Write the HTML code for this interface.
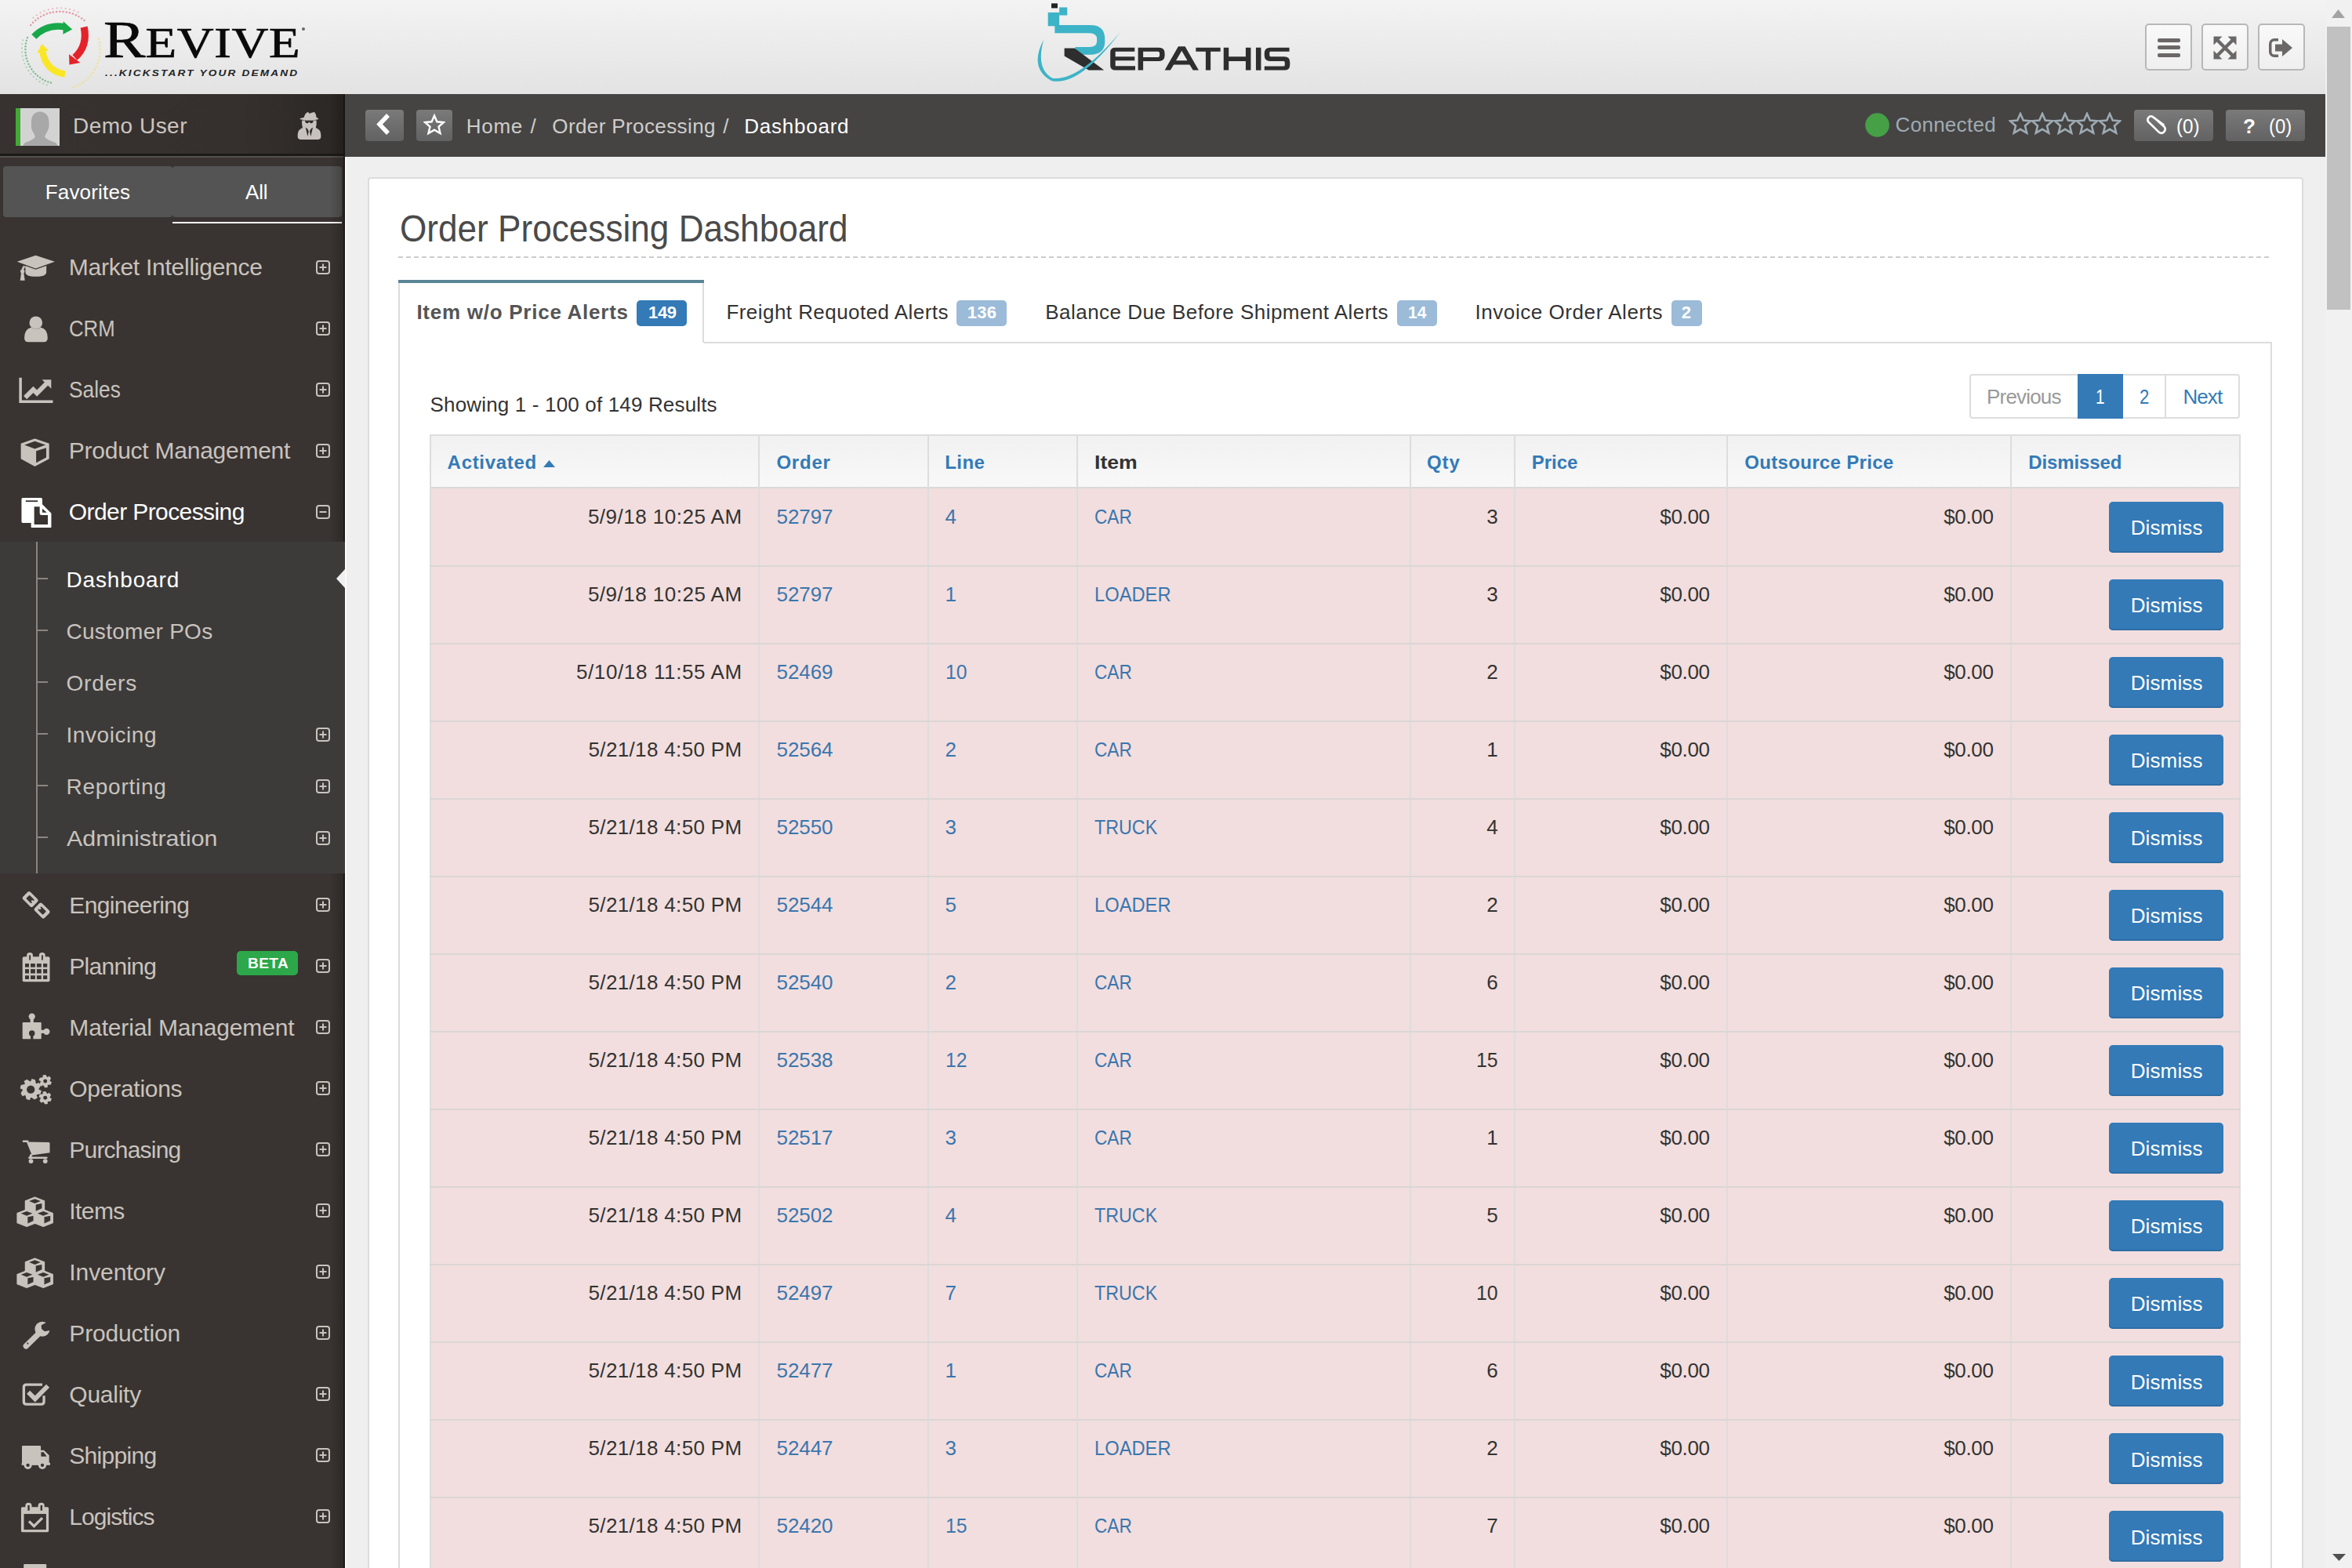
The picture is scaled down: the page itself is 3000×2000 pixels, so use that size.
<!DOCTYPE html><html><head><meta charset="utf-8"><style>
html,body{margin:0;padding:0;width:3000px;height:2000px;overflow:hidden;background:#efefef;font-family:"Liberation Sans",sans-serif;}
body{position:relative;}
</style></head><body><div style="position:absolute;left:0px;top:0px;width:2966px;height:120px;background:linear-gradient(#f3f3f3,#e3e3e3);"></div>
<div style="position:absolute;left:2966px;top:0px;width:34px;height:2000px;background:#f1f1f1;"></div>
<div style="position:absolute;left:2968px;top:34px;width:30px;height:361px;background:#c1c1c1;"></div>
<svg style="position:absolute;left:2974px;top:12px;" width="17" height="11" viewBox="0 0 17 11"><path d="M0 11 L8.5 0 L17 11Z" fill="#a3a3a3"/></svg>
<svg style="position:absolute;left:2975px;top:1982px;" width="17" height="9" viewBox="0 0 17 9"><path d="M0 0 L17 0 L8.5 9Z" fill="#505050"/></svg>
<div style="position:absolute;left:2736px;top:30px;width:56px;height:56px;border:2px solid #b8b8b8;border-radius:5px;background:linear-gradient(#f9f9f9,#efefef);"></div>
<div style="position:absolute;left:2808px;top:30px;width:56px;height:56px;border:2px solid #b8b8b8;border-radius:5px;background:linear-gradient(#f9f9f9,#efefef);"></div>
<div style="position:absolute;left:2880px;top:30px;width:56px;height:56px;border:2px solid #b8b8b8;border-radius:5px;background:linear-gradient(#f9f9f9,#efefef);"></div>
<div style="position:absolute;left:2751.5px;top:49px;width:29.5px;height:4.8px;background:#6b6767;border-radius:2px;"></div>
<div style="position:absolute;left:2751.5px;top:58.3px;width:29.5px;height:4.8px;background:#6b6767;border-radius:2px;"></div>
<div style="position:absolute;left:2751.5px;top:68px;width:29.5px;height:4.8px;background:#6b6767;border-radius:2px;"></div>
<svg style="position:absolute;left:2823px;top:46px;" width="30" height="30" viewBox="0 0 30 30"><g fill="#6b6767"><path d="M0.5 0.5H11.5L0.5 11.5Z"/><path d="M29.5 0.5V11.5L18.5 0.5Z"/><path d="M0.5 29.5V18.5L11.5 29.5Z"/><path d="M29.5 29.5H18.5L29.5 18.5Z"/></g><path d="M4 4L26 26M26 4L4 26" stroke="#6b6767" stroke-width="4.3"/></svg>
<svg style="position:absolute;left:2894px;top:49px;" width="30" height="24" viewBox="0 0 30 24"><g fill="#6b6767"><path d="M12 0H7A7 7 0 0 0 0 7V17A7 7 0 0 0 7 24H12V20.5H7A3.5 3.5 0 0 1 3.5 17V7A3.5 3.5 0 0 1 7 3.5H12Z"/><path d="M8 7.5H17V1L30 12L17 23V16.5H8Z"/></g></svg>
<div style="position:absolute;left:0px;top:120px;width:440px;height:1880px;background:#393431;"></div>
<div style="position:absolute;left:0px;top:120px;width:440px;height:77px;background:linear-gradient(90deg,#37322f 0%,#35302d 70%,#2b2724 100%);"></div>
<div style="position:absolute;left:0px;top:196px;width:440px;height:3px;background:#1c1a19;"></div>
<div style="position:absolute;left:0px;top:199px;width:440px;height:2px;background:#53504d;"></div>
<div style="position:absolute;left:20px;top:138px;width:56px;height:48px;background:#d3d3d3;"></div>
<div style="position:absolute;left:20px;top:138px;width:6px;height:48px;background:#43a935;"></div>
<svg style="position:absolute;left:26px;top:138px;" width="50" height="48" viewBox="0 0 50 48"><g fill="#a8a8a8"><path d="M14 20 Q13 5 25 4.5 Q37 5 36.5 20 Q37 26 33 32 L31 36 Q32 40 45 44 L48 48 L3 48 L6 44 Q18 40 19 36 L17 32 Q13 26 14 20Z"/></g></svg>
<div style="position:absolute;left:93.00px;top:147.30px;font-size:28px;line-height:28px;color:#cbc5c0;white-space:nowrap;letter-spacing:0.49px;">Demo User</div>
<svg style="position:absolute;left:300px;top:100px;" width="300" height="150" viewBox="0 0 2352 1176"><g fill="#c7c2be"><path d="M688 390 Q700 345 728 338 Q745 348 740 352 Q765 342 790 338 Q805 345 812 390 L835 402 Q830 418 740 418 Q650 418 645 402Z"/><path d="M668 420 L812 420 Q818 455 805 500 L675 500 Q662 455 668 420Z"/><path d="M625 560 Q625 505 690 490 L790 490 Q857 505 857 560 L857 585 Q857 612 825 612 L657 612 Q625 612 625 585Z"/></g><path d="M698 424 L782 424 L778 440 Q770 452 752 446 L740 436 L728 446 Q710 452 702 440Z" fill="#2f2b28"/><path d="M703 490 Q728 500 735 530 L725 580Z M777 490 Q752 500 745 530 L755 580Z" fill="#2f2b28"/></svg>
<div style="position:absolute;left:4px;top:212px;width:216px;height:65px;background:#545454;border-radius:4px;"></div>
<div style="position:absolute;left:220px;top:212px;width:216px;height:65px;background:#545454;border-radius:4px;"></div>
<div style="position:absolute;left:220px;top:283px;width:216px;height:2px;background:#ffffff;"></div>
<div style="position:absolute;left:57.80px;top:231.99px;font-size:26px;line-height:26px;color:#ffffff;white-space:nowrap;letter-spacing:0.16px;">Favorites</div>
<div style="position:absolute;left:313.00px;top:231.99px;font-size:26px;line-height:26px;color:#ffffff;white-space:nowrap;letter-spacing:-0.20px;">All</div>
<div style="position:absolute;left:87.80px;top:326.31px;font-size:30px;line-height:30px;color:#c9c3be;white-space:nowrap;letter-spacing:-0.26px;">Market Intelligence</div>
<div style="position:absolute;left:87.80px;top:404.31px;font-size:30px;line-height:30px;color:#c9c3be;white-space:nowrap;transform:scaleX(0.8580);transform-origin:0 0;">CRM</div>
<div style="position:absolute;left:87.80px;top:482.31px;font-size:30px;line-height:30px;color:#c9c3be;white-space:nowrap;transform:scaleX(0.8773);transform-origin:0 0;">Sales</div>
<div style="position:absolute;left:87.80px;top:560.31px;font-size:30px;line-height:30px;color:#c9c3be;white-space:nowrap;letter-spacing:-0.25px;">Product Management</div>
<div style="position:absolute;left:87.80px;top:638.31px;font-size:30px;line-height:30px;color:#ffffff;white-space:nowrap;letter-spacing:-0.59px;">Order Processing</div>
<div style="position:absolute;left:420px;top:120px;width:18px;height:1880px;background:linear-gradient(90deg,rgba(0,0,0,0),rgba(0,0,0,0.2));"></div>
<div style="position:absolute;left:438px;top:120px;width:2px;height:1880px;background:rgba(20,18,17,0.75);"></div>
<div style="position:absolute;left:440px;top:200px;width:1.5px;height:1800px;background:#fbfbfb;"></div>
<div style="position:absolute;left:0px;top:691px;width:440px;height:423px;background:#3d3b3a;"></div>
<div style="position:absolute;left:46px;top:691px;width:2px;height:423px;background:#8a8580;"></div>
<div style="position:absolute;left:84.50px;top:725.70px;font-size:28px;line-height:28px;color:#ffffff;white-space:nowrap;letter-spacing:0.84px;">Dashboard</div>
<div style="position:absolute;left:46px;top:736.9px;width:15px;height:2px;background:#8a8580;"></div>
<div style="position:absolute;left:84.50px;top:791.70px;font-size:28px;line-height:28px;color:#c9c3be;white-space:nowrap;letter-spacing:0.28px;">Customer POs</div>
<div style="position:absolute;left:46px;top:802.9px;width:15px;height:2px;background:#8a8580;"></div>
<div style="position:absolute;left:84.50px;top:857.70px;font-size:28px;line-height:28px;color:#c9c3be;white-space:nowrap;letter-spacing:0.82px;">Orders</div>
<div style="position:absolute;left:46px;top:868.9px;width:15px;height:2px;background:#8a8580;"></div>
<div style="position:absolute;left:84.50px;top:923.70px;font-size:28px;line-height:28px;color:#c9c3be;white-space:nowrap;letter-spacing:0.56px;">Invoicing</div>
<div style="position:absolute;left:46px;top:934.9px;width:15px;height:2px;background:#8a8580;"></div>
<div style="position:absolute;left:84.50px;top:989.70px;font-size:28px;line-height:28px;color:#c9c3be;white-space:nowrap;letter-spacing:0.74px;">Reporting</div>
<div style="position:absolute;left:46px;top:1000.9px;width:15px;height:2px;background:#8a8580;"></div>
<div style="position:absolute;left:84.50px;top:1055.70px;font-size:28px;line-height:28px;color:#c9c3be;white-space:nowrap;transform:scaleX(1.0851);transform-origin:0 0;">Administration</div>
<div style="position:absolute;left:46px;top:1066.9px;width:15px;height:2px;background:#8a8580;"></div>
<svg style="position:absolute;left:429px;top:726px;" width="11" height="24" viewBox="0 0 11 24"><path d="M11 0 L0 12 L11 24Z" fill="#efefef"/></svg>
<div style="position:absolute;left:88.30px;top:1140.01px;font-size:30px;line-height:30px;color:#c9c3be;white-space:nowrap;letter-spacing:-0.64px;">Engineering</div>
<div style="position:absolute;left:88.30px;top:1218.01px;font-size:30px;line-height:30px;color:#c9c3be;white-space:nowrap;letter-spacing:-0.73px;">Planning</div>
<div style="position:absolute;left:88.30px;top:1296.01px;font-size:30px;line-height:30px;color:#c9c3be;white-space:nowrap;letter-spacing:-0.16px;">Material Management</div>
<div style="position:absolute;left:88.30px;top:1374.01px;font-size:30px;line-height:30px;color:#c9c3be;white-space:nowrap;letter-spacing:-0.27px;">Operations</div>
<div style="position:absolute;left:88.30px;top:1452.01px;font-size:30px;line-height:30px;color:#c9c3be;white-space:nowrap;letter-spacing:-0.79px;">Purchasing</div>
<div style="position:absolute;left:88.30px;top:1530.01px;font-size:30px;line-height:30px;color:#c9c3be;white-space:nowrap;letter-spacing:-0.57px;">Items</div>
<div style="position:absolute;left:88.30px;top:1608.01px;font-size:30px;line-height:30px;color:#c9c3be;white-space:nowrap;letter-spacing:-0.09px;">Inventory</div>
<div style="position:absolute;left:88.30px;top:1686.01px;font-size:30px;line-height:30px;color:#c9c3be;white-space:nowrap;letter-spacing:-0.17px;">Production</div>
<div style="position:absolute;left:88.30px;top:1764.01px;font-size:30px;line-height:30px;color:#c9c3be;white-space:nowrap;letter-spacing:-0.25px;">Quality</div>
<div style="position:absolute;left:88.30px;top:1842.01px;font-size:30px;line-height:30px;color:#c9c3be;white-space:nowrap;letter-spacing:-0.69px;">Shipping</div>
<div style="position:absolute;left:88.30px;top:1920.01px;font-size:30px;line-height:30px;color:#c9c3be;white-space:nowrap;letter-spacing:-0.94px;">Logistics</div>
<div style="position:absolute;left:302px;top:1213px;width:78px;height:31px;background:#2ca84a;border-radius:5px;"></div>
<div style="position:absolute;left:316.00px;top:1218.52px;font-size:19px;line-height:19px;color:#ffffff;white-space:nowrap;font-weight:700;letter-spacing:0.43px;">BETA</div>
<svg style="position:absolute;left:402.5px;top:331.7px;" width="18" height="18" viewBox="0 0 18 18"><rect x="1" y="1" width="16" height="16" rx="3" fill="none" stroke="#c9c3be" stroke-width="2"/><path d="M4.5 9H13.5" stroke="#c9c3be" stroke-width="2"/><path d="M9 4.5V13.5" stroke="#c9c3be" stroke-width="2"/></svg>
<svg style="position:absolute;left:402.5px;top:409.7px;" width="18" height="18" viewBox="0 0 18 18"><rect x="1" y="1" width="16" height="16" rx="3" fill="none" stroke="#c9c3be" stroke-width="2"/><path d="M4.5 9H13.5" stroke="#c9c3be" stroke-width="2"/><path d="M9 4.5V13.5" stroke="#c9c3be" stroke-width="2"/></svg>
<svg style="position:absolute;left:402.5px;top:487.7px;" width="18" height="18" viewBox="0 0 18 18"><rect x="1" y="1" width="16" height="16" rx="3" fill="none" stroke="#c9c3be" stroke-width="2"/><path d="M4.5 9H13.5" stroke="#c9c3be" stroke-width="2"/><path d="M9 4.5V13.5" stroke="#c9c3be" stroke-width="2"/></svg>
<svg style="position:absolute;left:402.5px;top:565.7px;" width="18" height="18" viewBox="0 0 18 18"><rect x="1" y="1" width="16" height="16" rx="3" fill="none" stroke="#c9c3be" stroke-width="2"/><path d="M4.5 9H13.5" stroke="#c9c3be" stroke-width="2"/><path d="M9 4.5V13.5" stroke="#c9c3be" stroke-width="2"/></svg>
<svg style="position:absolute;left:402.5px;top:643.7px;" width="18" height="18" viewBox="0 0 18 18"><rect x="1" y="1" width="16" height="16" rx="3" fill="none" stroke="#c9c3be" stroke-width="2"/><path d="M4.5 9H13.5" stroke="#c9c3be" stroke-width="2"/></svg>
<svg style="position:absolute;left:402.5px;top:927.9px;" width="18" height="18" viewBox="0 0 18 18"><rect x="1" y="1" width="16" height="16" rx="3" fill="none" stroke="#c9c3be" stroke-width="2"/><path d="M4.5 9H13.5" stroke="#c9c3be" stroke-width="2"/><path d="M9 4.5V13.5" stroke="#c9c3be" stroke-width="2"/></svg>
<svg style="position:absolute;left:402.5px;top:993.9px;" width="18" height="18" viewBox="0 0 18 18"><rect x="1" y="1" width="16" height="16" rx="3" fill="none" stroke="#c9c3be" stroke-width="2"/><path d="M4.5 9H13.5" stroke="#c9c3be" stroke-width="2"/><path d="M9 4.5V13.5" stroke="#c9c3be" stroke-width="2"/></svg>
<svg style="position:absolute;left:402.5px;top:1059.9px;" width="18" height="18" viewBox="0 0 18 18"><rect x="1" y="1" width="16" height="16" rx="3" fill="none" stroke="#c9c3be" stroke-width="2"/><path d="M4.5 9H13.5" stroke="#c9c3be" stroke-width="2"/><path d="M9 4.5V13.5" stroke="#c9c3be" stroke-width="2"/></svg>
<svg style="position:absolute;left:402.5px;top:1145.4px;" width="18" height="18" viewBox="0 0 18 18"><rect x="1" y="1" width="16" height="16" rx="3" fill="none" stroke="#c9c3be" stroke-width="2"/><path d="M4.5 9H13.5" stroke="#c9c3be" stroke-width="2"/><path d="M9 4.5V13.5" stroke="#c9c3be" stroke-width="2"/></svg>
<svg style="position:absolute;left:402.5px;top:1223.4px;" width="18" height="18" viewBox="0 0 18 18"><rect x="1" y="1" width="16" height="16" rx="3" fill="none" stroke="#c9c3be" stroke-width="2"/><path d="M4.5 9H13.5" stroke="#c9c3be" stroke-width="2"/><path d="M9 4.5V13.5" stroke="#c9c3be" stroke-width="2"/></svg>
<svg style="position:absolute;left:402.5px;top:1301.4px;" width="18" height="18" viewBox="0 0 18 18"><rect x="1" y="1" width="16" height="16" rx="3" fill="none" stroke="#c9c3be" stroke-width="2"/><path d="M4.5 9H13.5" stroke="#c9c3be" stroke-width="2"/><path d="M9 4.5V13.5" stroke="#c9c3be" stroke-width="2"/></svg>
<svg style="position:absolute;left:402.5px;top:1379.4px;" width="18" height="18" viewBox="0 0 18 18"><rect x="1" y="1" width="16" height="16" rx="3" fill="none" stroke="#c9c3be" stroke-width="2"/><path d="M4.5 9H13.5" stroke="#c9c3be" stroke-width="2"/><path d="M9 4.5V13.5" stroke="#c9c3be" stroke-width="2"/></svg>
<svg style="position:absolute;left:402.5px;top:1457.4px;" width="18" height="18" viewBox="0 0 18 18"><rect x="1" y="1" width="16" height="16" rx="3" fill="none" stroke="#c9c3be" stroke-width="2"/><path d="M4.5 9H13.5" stroke="#c9c3be" stroke-width="2"/><path d="M9 4.5V13.5" stroke="#c9c3be" stroke-width="2"/></svg>
<svg style="position:absolute;left:402.5px;top:1535.4px;" width="18" height="18" viewBox="0 0 18 18"><rect x="1" y="1" width="16" height="16" rx="3" fill="none" stroke="#c9c3be" stroke-width="2"/><path d="M4.5 9H13.5" stroke="#c9c3be" stroke-width="2"/><path d="M9 4.5V13.5" stroke="#c9c3be" stroke-width="2"/></svg>
<svg style="position:absolute;left:402.5px;top:1613.4px;" width="18" height="18" viewBox="0 0 18 18"><rect x="1" y="1" width="16" height="16" rx="3" fill="none" stroke="#c9c3be" stroke-width="2"/><path d="M4.5 9H13.5" stroke="#c9c3be" stroke-width="2"/><path d="M9 4.5V13.5" stroke="#c9c3be" stroke-width="2"/></svg>
<svg style="position:absolute;left:402.5px;top:1691.4px;" width="18" height="18" viewBox="0 0 18 18"><rect x="1" y="1" width="16" height="16" rx="3" fill="none" stroke="#c9c3be" stroke-width="2"/><path d="M4.5 9H13.5" stroke="#c9c3be" stroke-width="2"/><path d="M9 4.5V13.5" stroke="#c9c3be" stroke-width="2"/></svg>
<svg style="position:absolute;left:402.5px;top:1769.4px;" width="18" height="18" viewBox="0 0 18 18"><rect x="1" y="1" width="16" height="16" rx="3" fill="none" stroke="#c9c3be" stroke-width="2"/><path d="M4.5 9H13.5" stroke="#c9c3be" stroke-width="2"/><path d="M9 4.5V13.5" stroke="#c9c3be" stroke-width="2"/></svg>
<svg style="position:absolute;left:402.5px;top:1847.4px;" width="18" height="18" viewBox="0 0 18 18"><rect x="1" y="1" width="16" height="16" rx="3" fill="none" stroke="#c9c3be" stroke-width="2"/><path d="M4.5 9H13.5" stroke="#c9c3be" stroke-width="2"/><path d="M9 4.5V13.5" stroke="#c9c3be" stroke-width="2"/></svg>
<svg style="position:absolute;left:402.5px;top:1925.4px;" width="18" height="18" viewBox="0 0 18 18"><rect x="1" y="1" width="16" height="16" rx="3" fill="none" stroke="#c9c3be" stroke-width="2"/><path d="M4.5 9H13.5" stroke="#c9c3be" stroke-width="2"/><path d="M9 4.5V13.5" stroke="#c9c3be" stroke-width="2"/></svg>
<div style="position:absolute;left:440px;top:120px;width:2526px;height:80px;background:#454443;"></div>
<div style="position:absolute;left:466px;top:140px;width:49px;height:40px;background:linear-gradient(#7a7a7a,#626262);border-radius:4px;"></div>
<div style="position:absolute;left:531px;top:140px;width:46px;height:40px;background:linear-gradient(#7a7a7a,#626262);border-radius:4px;"></div>
<svg style="position:absolute;left:480px;top:145px;" width="20" height="30" viewBox="0 0 20 30"><path d="M15 2 L4 13.5 L15 25" fill="none" stroke="#fff" stroke-width="5.5"/></svg>
<svg style="position:absolute;left:540px;top:145px;" width="28" height="28" viewBox="0 0 28 28"><path d="M14 2.5 L17.4 10.3 L25.8 11 L19.5 16.6 L21.5 25 L14 20.6 L6.5 25 L8.5 16.6 L2.2 11 L10.6 10.3Z" fill="none" stroke="#fff" stroke-width="2.4"/></svg>
<div style="position:absolute;left:594.80px;top:147.99px;font-size:26px;line-height:26px;color:#d0cdca;white-space:nowrap;letter-spacing:0.70px;">Home</div>
<div style="position:absolute;left:676.50px;top:147.99px;font-size:26px;line-height:26px;color:#d0cdca;white-space:nowrap;">/</div>
<div style="position:absolute;left:704.30px;top:147.99px;font-size:26px;line-height:26px;color:#d0cdca;white-space:nowrap;letter-spacing:0.39px;">Order Processing</div>
<div style="position:absolute;left:922.20px;top:147.99px;font-size:26px;line-height:26px;color:#d0cdca;white-space:nowrap;">/</div>
<div style="position:absolute;left:949.30px;top:147.99px;font-size:26px;line-height:26px;color:#ffffff;white-space:nowrap;letter-spacing:0.76px;">Dashboard</div>
<svg style="position:absolute;left:2379px;top:144px;" width="31" height="31" viewBox="0 0 31 31"><circle cx="15.5" cy="15.5" r="15.3" fill="#46a046"/></svg>
<div style="position:absolute;left:2417.60px;top:145.99px;font-size:26px;line-height:26px;color:#9fabb3;white-space:nowrap;letter-spacing:0.28px;">Connected</div>
<svg style="position:absolute;left:2561.5px;top:143px;" width="30" height="30" viewBox="0 0 30 30"><path d="M15 2 L18.8 10.5 L28 11.3 L21 17.5 L23.2 26.6 L15 21.8 L6.8 26.6 L9 17.5 L2 11.3 L11.2 10.5Z" fill="none" stroke="#9eabb3" stroke-width="2.6"/></svg>
<svg style="position:absolute;left:2590.1px;top:143px;" width="30" height="30" viewBox="0 0 30 30"><path d="M15 2 L18.8 10.5 L28 11.3 L21 17.5 L23.2 26.6 L15 21.8 L6.8 26.6 L9 17.5 L2 11.3 L11.2 10.5Z" fill="none" stroke="#9eabb3" stroke-width="2.6"/></svg>
<svg style="position:absolute;left:2618.7px;top:143px;" width="30" height="30" viewBox="0 0 30 30"><path d="M15 2 L18.8 10.5 L28 11.3 L21 17.5 L23.2 26.6 L15 21.8 L6.8 26.6 L9 17.5 L2 11.3 L11.2 10.5Z" fill="none" stroke="#9eabb3" stroke-width="2.6"/></svg>
<svg style="position:absolute;left:2647.3px;top:143px;" width="30" height="30" viewBox="0 0 30 30"><path d="M15 2 L18.8 10.5 L28 11.3 L21 17.5 L23.2 26.6 L15 21.8 L6.8 26.6 L9 17.5 L2 11.3 L11.2 10.5Z" fill="none" stroke="#9eabb3" stroke-width="2.6"/></svg>
<svg style="position:absolute;left:2675.9px;top:143px;" width="30" height="30" viewBox="0 0 30 30"><path d="M15 2 L18.8 10.5 L28 11.3 L21 17.5 L23.2 26.6 L15 21.8 L6.8 26.6 L9 17.5 L2 11.3 L11.2 10.5Z" fill="none" stroke="#9eabb3" stroke-width="2.6"/></svg>
<div style="position:absolute;left:2722px;top:140px;width:101px;height:40px;background:linear-gradient(#7a7a7a,#626262);border-radius:4px;"></div>
<div style="position:absolute;left:2839px;top:140px;width:101px;height:40px;background:linear-gradient(#7a7a7a,#626262);border-radius:4px;"></div>
<svg style="position:absolute;left:2710px;top:130px;" width="260" height="60" viewBox="0 0 2352 543"><path d="M448 262 L318 168 A40 40 0 0 0 272 228 L398 352 A45 45 0 0 0 460 290 L350 190" fill="none" stroke="#fff" stroke-width="24" stroke-linecap="round" stroke-linejoin="round"/></svg>
<div style="position:absolute;left:2776.30px;top:147.99px;font-size:26px;line-height:26px;color:#ffffff;white-space:nowrap;transform:scaleX(0.9340);transform-origin:0 0;">(0)</div>
<div style="position:absolute;left:2860.90px;top:147.99px;font-size:26px;line-height:26px;color:#ffffff;white-space:nowrap;font-weight:700;letter-spacing:-0.40px;">?</div>
<div style="position:absolute;left:2893.50px;top:147.99px;font-size:26px;line-height:26px;color:#ffffff;white-space:nowrap;transform:scaleX(0.9214);transform-origin:0 0;">(0)</div>
<div style="position:absolute;left:469px;top:226px;width:2465px;height:1800px;border:2px solid #dcdcdc;border-radius:4px;background:#fff;"></div>
<div style="position:absolute;left:509.50px;top:267.87px;font-size:48px;line-height:48px;color:#4a4a4a;white-space:nowrap;transform:scaleX(0.9194);transform-origin:0 0;">Order Processing Dashboard</div>
<div style="position:absolute;left:508px;top:327px;width:2390px;height:2px;background-image:linear-gradient(90deg,#cccccc 6px,transparent 6px);background-size:10px 2px;"></div>
<div style="position:absolute;left:508px;top:357px;width:390px;height:4px;background:#5a8597;"></div>
<div style="position:absolute;left:508px;top:361px;width:2px;height:1700px;background:#dcdcdc;"></div>
<div style="position:absolute;left:896px;top:361px;width:2px;height:76px;background:#dcdcdc;"></div>
<div style="position:absolute;left:898px;top:435.5px;width:2000px;height:2px;background:#dcdcdc;"></div>
<div style="position:absolute;left:2896px;top:435.5px;width:2px;height:1700px;background:#dcdcdc;"></div>
<div style="position:absolute;left:531.40px;top:384.99px;font-size:26px;line-height:26px;color:#555555;white-space:nowrap;font-weight:700;letter-spacing:0.74px;">Item w/o Price Alerts</div>
<div style="position:absolute;left:812px;top:383px;width:64px;height:33px;background:#337ab7;border-radius:5px;"></div>
<div style="position:absolute;left:827.00px;top:388.38px;font-size:22px;line-height:22px;color:#ffffff;white-space:nowrap;font-weight:700;letter-spacing:-0.35px;">149</div>
<div style="position:absolute;left:926.40px;top:384.99px;font-size:26px;line-height:26px;color:#333333;white-space:nowrap;letter-spacing:0.45px;">Freight Requoted Alerts</div>
<div style="position:absolute;left:1220px;top:383px;width:64px;height:33px;background:#9bbbd8;border-radius:5px;"></div>
<div style="position:absolute;left:1233.70px;top:388.38px;font-size:22px;line-height:22px;color:#ffffff;white-space:nowrap;font-weight:700;letter-spacing:0.30px;">136</div>
<div style="position:absolute;left:1333.30px;top:384.99px;font-size:26px;line-height:26px;color:#333333;white-space:nowrap;letter-spacing:0.46px;">Balance Due Before Shipment Alerts</div>
<div style="position:absolute;left:1782px;top:383px;width:51px;height:33px;background:#9bbbd8;border-radius:5px;"></div>
<div style="position:absolute;left:1796.30px;top:388.38px;font-size:22px;line-height:22px;color:#ffffff;white-space:nowrap;font-weight:700;transform:scaleX(0.9551);transform-origin:0 0;">14</div>
<div style="position:absolute;left:1881.50px;top:384.99px;font-size:26px;line-height:26px;color:#333333;white-space:nowrap;letter-spacing:0.56px;">Invoice Order Alerts</div>
<div style="position:absolute;left:2132px;top:383px;width:38.5px;height:33px;background:#9bbbd8;border-radius:5px;"></div>
<div style="position:absolute;left:2144.80px;top:388.38px;font-size:22px;line-height:22px;color:#ffffff;white-space:nowrap;font-weight:700;letter-spacing:0.90px;">2</div>
<div style="position:absolute;left:548.60px;top:502.99px;font-size:26px;line-height:26px;color:#333333;white-space:nowrap;letter-spacing:0.16px;">Showing 1 - 100 of 149 Results</div>
<div style="position:absolute;left:2512px;top:476.5px;width:345px;height:57px;border:2px solid #dddddd;border-radius:4px;box-sizing:border-box;background:#fff;"></div>
<div style="position:absolute;left:2650px;top:476.5px;width:58px;height:57px;background:#337ab7;"></div>
<div style="position:absolute;left:2761px;top:476.5px;width:2px;height:57px;background:#dddddd;"></div>
<div style="position:absolute;left:2534.00px;top:492.59px;font-size:26px;line-height:26px;color:#999999;white-space:nowrap;letter-spacing:-0.81px;">Previous</div>
<div style="position:absolute;left:2672.60px;top:492.59px;font-size:26px;line-height:26px;color:#ffffff;white-space:nowrap;transform:scaleX(0.8000);transform-origin:0 0;">1</div>
<div style="position:absolute;left:2729.00px;top:492.59px;font-size:26px;line-height:26px;color:#337ab7;white-space:nowrap;transform:scaleX(0.8483);transform-origin:0 0;">2</div>
<div style="position:absolute;left:2784.40px;top:492.59px;font-size:26px;line-height:26px;color:#337ab7;white-space:nowrap;letter-spacing:-0.90px;">Next</div>
<div style="position:absolute;left:548px;top:554px;width:2310px;height:67px;background:linear-gradient(#f1f1f1,#f8f8f8);"></div>
<div style="position:absolute;left:548px;top:623px;width:2310px;height:2000px;background:#f2dede;"></div>
<div style="position:absolute;left:548px;top:554px;width:2310px;height:2px;background:#dddddd;"></div>
<div style="position:absolute;left:548px;top:621px;width:2310px;height:2px;background:#d9d9d9;"></div>
<div style="position:absolute;left:548px;top:554px;width:2px;height:2000px;background:#dddddd;"></div>
<div style="position:absolute;left:967px;top:554px;width:2px;height:2000px;background:#dddddd;"></div>
<div style="position:absolute;left:1183px;top:554px;width:2px;height:2000px;background:#dddddd;"></div>
<div style="position:absolute;left:1373px;top:554px;width:2px;height:2000px;background:#dddddd;"></div>
<div style="position:absolute;left:1798px;top:554px;width:2px;height:2000px;background:#dddddd;"></div>
<div style="position:absolute;left:1931px;top:554px;width:2px;height:2000px;background:#dddddd;"></div>
<div style="position:absolute;left:2202px;top:554px;width:2px;height:2000px;background:#dddddd;"></div>
<div style="position:absolute;left:2564px;top:554px;width:2px;height:2000px;background:#dddddd;"></div>
<div style="position:absolute;left:2856px;top:554px;width:2px;height:2000px;background:#dddddd;"></div>
<div style="position:absolute;left:570.60px;top:577.68px;font-size:24px;line-height:24px;color:#337ab7;white-space:nowrap;font-weight:700;letter-spacing:0.70px;">Activated</div>
<div style="position:absolute;left:990.40px;top:577.68px;font-size:24px;line-height:24px;color:#337ab7;white-space:nowrap;font-weight:700;letter-spacing:0.78px;">Order</div>
<div style="position:absolute;left:1205.30px;top:577.68px;font-size:24px;line-height:24px;color:#337ab7;white-space:nowrap;font-weight:700;letter-spacing:0.40px;">Line</div>
<div style="position:absolute;left:1395.60px;top:577.68px;font-size:24px;line-height:24px;color:#333333;white-space:nowrap;font-weight:700;transform:scaleX(1.1093);transform-origin:0 0;">Item</div>
<div style="position:absolute;left:1820.00px;top:577.68px;font-size:24px;line-height:24px;color:#337ab7;white-space:nowrap;font-weight:700;letter-spacing:0.90px;">Qty</div>
<div style="position:absolute;left:1953.70px;top:577.68px;font-size:24px;line-height:24px;color:#337ab7;white-space:nowrap;font-weight:700;letter-spacing:0.00px;">Price</div>
<div style="position:absolute;left:2225.30px;top:577.68px;font-size:24px;line-height:24px;color:#337ab7;white-space:nowrap;font-weight:700;letter-spacing:0.32px;">Outsource Price</div>
<div style="position:absolute;left:2587.20px;top:577.68px;font-size:24px;line-height:24px;color:#337ab7;white-space:nowrap;font-weight:700;letter-spacing:-0.10px;">Dismissed</div>
<svg style="position:absolute;left:693px;top:586.5px;" width="15" height="9" viewBox="0 0 15 9"><path d="M0 9 L7.5 0 L15 9Z" fill="#337ab7"/></svg>
<div style="position:absolute;left:749.90px;top:645.79px;font-size:26px;line-height:26px;color:#333333;white-space:nowrap;letter-spacing:0.49px;">5/9/18 10:25 AM</div>
<div style="position:absolute;left:990.50px;top:645.79px;font-size:26px;line-height:26px;color:#3a76ae;white-space:nowrap;letter-spacing:-0.07px;">52797</div>
<div style="position:absolute;left:1205.50px;top:645.79px;font-size:26px;line-height:26px;color:#3a76ae;white-space:nowrap;">4</div>
<div style="position:absolute;left:1396.00px;top:645.79px;font-size:26px;line-height:26px;color:#3a76ae;white-space:nowrap;transform:scaleX(0.8707);transform-origin:0 0;">CAR</div>
<div style="position:absolute;left:1896.20px;top:645.79px;font-size:26px;line-height:26px;color:#333333;white-space:nowrap;">3</div>
<div style="position:absolute;left:2117.30px;top:645.79px;font-size:26px;line-height:26px;color:#333333;white-space:nowrap;letter-spacing:-0.35px;">$0.00</div>
<div style="position:absolute;left:2479.20px;top:645.79px;font-size:26px;line-height:26px;color:#333333;white-space:nowrap;letter-spacing:-0.35px;">$0.00</div>
<div style="position:absolute;left:2690.2px;top:640.0999999999999px;width:146px;height:64.6px;background:#337ab7;border-radius:5px;box-shadow:inset 0 -2px 0 #2e6da4;"></div>
<div style="position:absolute;left:2717.70px;top:660.19px;font-size:26px;line-height:26px;color:#ffffff;white-space:nowrap;letter-spacing:0.12px;">Dismiss</div>
<div style="position:absolute;left:548px;top:720.6px;width:2310px;height:2px;background:#dcd6d6;"></div>
<div style="position:absolute;left:749.90px;top:744.82px;font-size:26px;line-height:26px;color:#333333;white-space:nowrap;letter-spacing:0.49px;">5/9/18 10:25 AM</div>
<div style="position:absolute;left:990.50px;top:744.82px;font-size:26px;line-height:26px;color:#3a76ae;white-space:nowrap;letter-spacing:-0.07px;">52797</div>
<div style="position:absolute;left:1205.50px;top:744.82px;font-size:26px;line-height:26px;color:#3a76ae;white-space:nowrap;">1</div>
<div style="position:absolute;left:1396.00px;top:744.82px;font-size:26px;line-height:26px;color:#3a76ae;white-space:nowrap;transform:scaleX(0.9121);transform-origin:0 0;">LOADER</div>
<div style="position:absolute;left:1896.20px;top:744.82px;font-size:26px;line-height:26px;color:#333333;white-space:nowrap;">3</div>
<div style="position:absolute;left:2117.30px;top:744.82px;font-size:26px;line-height:26px;color:#333333;white-space:nowrap;letter-spacing:-0.35px;">$0.00</div>
<div style="position:absolute;left:2479.20px;top:744.82px;font-size:26px;line-height:26px;color:#333333;white-space:nowrap;letter-spacing:-0.35px;">$0.00</div>
<div style="position:absolute;left:2690.2px;top:739.1299999999999px;width:146px;height:64.6px;background:#337ab7;border-radius:5px;box-shadow:inset 0 -2px 0 #2e6da4;"></div>
<div style="position:absolute;left:2717.70px;top:759.22px;font-size:26px;line-height:26px;color:#ffffff;white-space:nowrap;letter-spacing:0.12px;">Dismiss</div>
<div style="position:absolute;left:548px;top:819.63px;width:2310px;height:2px;background:#dcd6d6;"></div>
<div style="position:absolute;left:734.90px;top:843.85px;font-size:26px;line-height:26px;color:#333333;white-space:nowrap;letter-spacing:0.63px;">5/10/18 11:55 AM</div>
<div style="position:absolute;left:990.50px;top:843.85px;font-size:26px;line-height:26px;color:#3a76ae;white-space:nowrap;letter-spacing:-0.07px;">52469</div>
<div style="position:absolute;left:1205.50px;top:843.85px;font-size:26px;line-height:26px;color:#3a76ae;white-space:nowrap;transform:scaleX(0.9516);transform-origin:0 0;">10</div>
<div style="position:absolute;left:1396.00px;top:843.85px;font-size:26px;line-height:26px;color:#3a76ae;white-space:nowrap;transform:scaleX(0.8707);transform-origin:0 0;">CAR</div>
<div style="position:absolute;left:1896.20px;top:843.85px;font-size:26px;line-height:26px;color:#333333;white-space:nowrap;">2</div>
<div style="position:absolute;left:2117.30px;top:843.85px;font-size:26px;line-height:26px;color:#333333;white-space:nowrap;letter-spacing:-0.35px;">$0.00</div>
<div style="position:absolute;left:2479.20px;top:843.85px;font-size:26px;line-height:26px;color:#333333;white-space:nowrap;letter-spacing:-0.35px;">$0.00</div>
<div style="position:absolute;left:2690.2px;top:838.1599999999999px;width:146px;height:64.6px;background:#337ab7;border-radius:5px;box-shadow:inset 0 -2px 0 #2e6da4;"></div>
<div style="position:absolute;left:2717.70px;top:858.25px;font-size:26px;line-height:26px;color:#ffffff;white-space:nowrap;letter-spacing:0.12px;">Dismiss</div>
<div style="position:absolute;left:548px;top:918.6600000000001px;width:2310px;height:2px;background:#dcd6d6;"></div>
<div style="position:absolute;left:750.50px;top:942.88px;font-size:26px;line-height:26px;color:#333333;white-space:nowrap;letter-spacing:0.35px;">5/21/18 4:50 PM</div>
<div style="position:absolute;left:990.50px;top:942.88px;font-size:26px;line-height:26px;color:#3a76ae;white-space:nowrap;letter-spacing:-0.07px;">52564</div>
<div style="position:absolute;left:1205.50px;top:942.88px;font-size:26px;line-height:26px;color:#3a76ae;white-space:nowrap;">2</div>
<div style="position:absolute;left:1396.00px;top:942.88px;font-size:26px;line-height:26px;color:#3a76ae;white-space:nowrap;transform:scaleX(0.8707);transform-origin:0 0;">CAR</div>
<div style="position:absolute;left:1896.20px;top:942.88px;font-size:26px;line-height:26px;color:#333333;white-space:nowrap;">1</div>
<div style="position:absolute;left:2117.30px;top:942.88px;font-size:26px;line-height:26px;color:#333333;white-space:nowrap;letter-spacing:-0.35px;">$0.00</div>
<div style="position:absolute;left:2479.20px;top:942.88px;font-size:26px;line-height:26px;color:#333333;white-space:nowrap;letter-spacing:-0.35px;">$0.00</div>
<div style="position:absolute;left:2690.2px;top:937.1899999999999px;width:146px;height:64.6px;background:#337ab7;border-radius:5px;box-shadow:inset 0 -2px 0 #2e6da4;"></div>
<div style="position:absolute;left:2717.70px;top:957.28px;font-size:26px;line-height:26px;color:#ffffff;white-space:nowrap;letter-spacing:0.12px;">Dismiss</div>
<div style="position:absolute;left:548px;top:1017.69px;width:2310px;height:2px;background:#dcd6d6;"></div>
<div style="position:absolute;left:750.50px;top:1041.91px;font-size:26px;line-height:26px;color:#333333;white-space:nowrap;letter-spacing:0.35px;">5/21/18 4:50 PM</div>
<div style="position:absolute;left:990.50px;top:1041.91px;font-size:26px;line-height:26px;color:#3a76ae;white-space:nowrap;letter-spacing:-0.07px;">52550</div>
<div style="position:absolute;left:1205.50px;top:1041.91px;font-size:26px;line-height:26px;color:#3a76ae;white-space:nowrap;">3</div>
<div style="position:absolute;left:1396.00px;top:1041.91px;font-size:26px;line-height:26px;color:#3a76ae;white-space:nowrap;transform:scaleX(0.8951);transform-origin:0 0;">TRUCK</div>
<div style="position:absolute;left:1896.20px;top:1041.91px;font-size:26px;line-height:26px;color:#333333;white-space:nowrap;">4</div>
<div style="position:absolute;left:2117.30px;top:1041.91px;font-size:26px;line-height:26px;color:#333333;white-space:nowrap;letter-spacing:-0.35px;">$0.00</div>
<div style="position:absolute;left:2479.20px;top:1041.91px;font-size:26px;line-height:26px;color:#333333;white-space:nowrap;letter-spacing:-0.35px;">$0.00</div>
<div style="position:absolute;left:2690.2px;top:1036.22px;width:146px;height:64.6px;background:#337ab7;border-radius:5px;box-shadow:inset 0 -2px 0 #2e6da4;"></div>
<div style="position:absolute;left:2717.70px;top:1056.31px;font-size:26px;line-height:26px;color:#ffffff;white-space:nowrap;letter-spacing:0.12px;">Dismiss</div>
<div style="position:absolute;left:548px;top:1116.72px;width:2310px;height:2px;background:#dcd6d6;"></div>
<div style="position:absolute;left:750.50px;top:1140.94px;font-size:26px;line-height:26px;color:#333333;white-space:nowrap;letter-spacing:0.35px;">5/21/18 4:50 PM</div>
<div style="position:absolute;left:990.50px;top:1140.94px;font-size:26px;line-height:26px;color:#3a76ae;white-space:nowrap;letter-spacing:-0.07px;">52544</div>
<div style="position:absolute;left:1205.50px;top:1140.94px;font-size:26px;line-height:26px;color:#3a76ae;white-space:nowrap;">5</div>
<div style="position:absolute;left:1396.00px;top:1140.94px;font-size:26px;line-height:26px;color:#3a76ae;white-space:nowrap;transform:scaleX(0.9121);transform-origin:0 0;">LOADER</div>
<div style="position:absolute;left:1896.20px;top:1140.94px;font-size:26px;line-height:26px;color:#333333;white-space:nowrap;">2</div>
<div style="position:absolute;left:2117.30px;top:1140.94px;font-size:26px;line-height:26px;color:#333333;white-space:nowrap;letter-spacing:-0.35px;">$0.00</div>
<div style="position:absolute;left:2479.20px;top:1140.94px;font-size:26px;line-height:26px;color:#333333;white-space:nowrap;letter-spacing:-0.35px;">$0.00</div>
<div style="position:absolute;left:2690.2px;top:1135.2499999999998px;width:146px;height:64.6px;background:#337ab7;border-radius:5px;box-shadow:inset 0 -2px 0 #2e6da4;"></div>
<div style="position:absolute;left:2717.70px;top:1155.34px;font-size:26px;line-height:26px;color:#ffffff;white-space:nowrap;letter-spacing:0.12px;">Dismiss</div>
<div style="position:absolute;left:548px;top:1215.75px;width:2310px;height:2px;background:#dcd6d6;"></div>
<div style="position:absolute;left:750.50px;top:1239.97px;font-size:26px;line-height:26px;color:#333333;white-space:nowrap;letter-spacing:0.35px;">5/21/18 4:50 PM</div>
<div style="position:absolute;left:990.50px;top:1239.97px;font-size:26px;line-height:26px;color:#3a76ae;white-space:nowrap;letter-spacing:-0.07px;">52540</div>
<div style="position:absolute;left:1205.50px;top:1239.97px;font-size:26px;line-height:26px;color:#3a76ae;white-space:nowrap;">2</div>
<div style="position:absolute;left:1396.00px;top:1239.97px;font-size:26px;line-height:26px;color:#3a76ae;white-space:nowrap;transform:scaleX(0.8707);transform-origin:0 0;">CAR</div>
<div style="position:absolute;left:1896.20px;top:1239.97px;font-size:26px;line-height:26px;color:#333333;white-space:nowrap;">6</div>
<div style="position:absolute;left:2117.30px;top:1239.97px;font-size:26px;line-height:26px;color:#333333;white-space:nowrap;letter-spacing:-0.35px;">$0.00</div>
<div style="position:absolute;left:2479.20px;top:1239.97px;font-size:26px;line-height:26px;color:#333333;white-space:nowrap;letter-spacing:-0.35px;">$0.00</div>
<div style="position:absolute;left:2690.2px;top:1234.28px;width:146px;height:64.6px;background:#337ab7;border-radius:5px;box-shadow:inset 0 -2px 0 #2e6da4;"></div>
<div style="position:absolute;left:2717.70px;top:1254.37px;font-size:26px;line-height:26px;color:#ffffff;white-space:nowrap;letter-spacing:0.12px;">Dismiss</div>
<div style="position:absolute;left:548px;top:1314.7800000000002px;width:2310px;height:2px;background:#dcd6d6;"></div>
<div style="position:absolute;left:750.50px;top:1339.00px;font-size:26px;line-height:26px;color:#333333;white-space:nowrap;letter-spacing:0.35px;">5/21/18 4:50 PM</div>
<div style="position:absolute;left:990.50px;top:1339.00px;font-size:26px;line-height:26px;color:#3a76ae;white-space:nowrap;letter-spacing:-0.07px;">52538</div>
<div style="position:absolute;left:1205.50px;top:1339.00px;font-size:26px;line-height:26px;color:#3a76ae;white-space:nowrap;transform:scaleX(0.9516);transform-origin:0 0;">12</div>
<div style="position:absolute;left:1396.00px;top:1339.00px;font-size:26px;line-height:26px;color:#3a76ae;white-space:nowrap;transform:scaleX(0.8707);transform-origin:0 0;">CAR</div>
<div style="position:absolute;left:1883.20px;top:1339.00px;font-size:26px;line-height:26px;color:#333333;white-space:nowrap;transform:scaleX(0.9516);transform-origin:0 0;">15</div>
<div style="position:absolute;left:2117.30px;top:1339.00px;font-size:26px;line-height:26px;color:#333333;white-space:nowrap;letter-spacing:-0.35px;">$0.00</div>
<div style="position:absolute;left:2479.20px;top:1339.00px;font-size:26px;line-height:26px;color:#333333;white-space:nowrap;letter-spacing:-0.35px;">$0.00</div>
<div style="position:absolute;left:2690.2px;top:1333.31px;width:146px;height:64.6px;background:#337ab7;border-radius:5px;box-shadow:inset 0 -2px 0 #2e6da4;"></div>
<div style="position:absolute;left:2717.70px;top:1353.40px;font-size:26px;line-height:26px;color:#ffffff;white-space:nowrap;letter-spacing:0.12px;">Dismiss</div>
<div style="position:absolute;left:548px;top:1413.81px;width:2310px;height:2px;background:#dcd6d6;"></div>
<div style="position:absolute;left:750.50px;top:1438.03px;font-size:26px;line-height:26px;color:#333333;white-space:nowrap;letter-spacing:0.35px;">5/21/18 4:50 PM</div>
<div style="position:absolute;left:990.50px;top:1438.03px;font-size:26px;line-height:26px;color:#3a76ae;white-space:nowrap;letter-spacing:-0.07px;">52517</div>
<div style="position:absolute;left:1205.50px;top:1438.03px;font-size:26px;line-height:26px;color:#3a76ae;white-space:nowrap;">3</div>
<div style="position:absolute;left:1396.00px;top:1438.03px;font-size:26px;line-height:26px;color:#3a76ae;white-space:nowrap;transform:scaleX(0.8707);transform-origin:0 0;">CAR</div>
<div style="position:absolute;left:1896.20px;top:1438.03px;font-size:26px;line-height:26px;color:#333333;white-space:nowrap;">1</div>
<div style="position:absolute;left:2117.30px;top:1438.03px;font-size:26px;line-height:26px;color:#333333;white-space:nowrap;letter-spacing:-0.35px;">$0.00</div>
<div style="position:absolute;left:2479.20px;top:1438.03px;font-size:26px;line-height:26px;color:#333333;white-space:nowrap;letter-spacing:-0.35px;">$0.00</div>
<div style="position:absolute;left:2690.2px;top:1432.34px;width:146px;height:64.6px;background:#337ab7;border-radius:5px;box-shadow:inset 0 -2px 0 #2e6da4;"></div>
<div style="position:absolute;left:2717.70px;top:1452.43px;font-size:26px;line-height:26px;color:#ffffff;white-space:nowrap;letter-spacing:0.12px;">Dismiss</div>
<div style="position:absolute;left:548px;top:1512.8400000000001px;width:2310px;height:2px;background:#dcd6d6;"></div>
<div style="position:absolute;left:750.50px;top:1537.06px;font-size:26px;line-height:26px;color:#333333;white-space:nowrap;letter-spacing:0.35px;">5/21/18 4:50 PM</div>
<div style="position:absolute;left:990.50px;top:1537.06px;font-size:26px;line-height:26px;color:#3a76ae;white-space:nowrap;letter-spacing:-0.07px;">52502</div>
<div style="position:absolute;left:1205.50px;top:1537.06px;font-size:26px;line-height:26px;color:#3a76ae;white-space:nowrap;">4</div>
<div style="position:absolute;left:1396.00px;top:1537.06px;font-size:26px;line-height:26px;color:#3a76ae;white-space:nowrap;transform:scaleX(0.8951);transform-origin:0 0;">TRUCK</div>
<div style="position:absolute;left:1896.20px;top:1537.06px;font-size:26px;line-height:26px;color:#333333;white-space:nowrap;">5</div>
<div style="position:absolute;left:2117.30px;top:1537.06px;font-size:26px;line-height:26px;color:#333333;white-space:nowrap;letter-spacing:-0.35px;">$0.00</div>
<div style="position:absolute;left:2479.20px;top:1537.06px;font-size:26px;line-height:26px;color:#333333;white-space:nowrap;letter-spacing:-0.35px;">$0.00</div>
<div style="position:absolute;left:2690.2px;top:1531.37px;width:146px;height:64.6px;background:#337ab7;border-radius:5px;box-shadow:inset 0 -2px 0 #2e6da4;"></div>
<div style="position:absolute;left:2717.70px;top:1551.46px;font-size:26px;line-height:26px;color:#ffffff;white-space:nowrap;letter-spacing:0.12px;">Dismiss</div>
<div style="position:absolute;left:548px;top:1611.87px;width:2310px;height:2px;background:#dcd6d6;"></div>
<div style="position:absolute;left:750.50px;top:1636.09px;font-size:26px;line-height:26px;color:#333333;white-space:nowrap;letter-spacing:0.35px;">5/21/18 4:50 PM</div>
<div style="position:absolute;left:990.50px;top:1636.09px;font-size:26px;line-height:26px;color:#3a76ae;white-space:nowrap;letter-spacing:-0.07px;">52497</div>
<div style="position:absolute;left:1205.50px;top:1636.09px;font-size:26px;line-height:26px;color:#3a76ae;white-space:nowrap;">7</div>
<div style="position:absolute;left:1396.00px;top:1636.09px;font-size:26px;line-height:26px;color:#3a76ae;white-space:nowrap;transform:scaleX(0.8951);transform-origin:0 0;">TRUCK</div>
<div style="position:absolute;left:1883.20px;top:1636.09px;font-size:26px;line-height:26px;color:#333333;white-space:nowrap;transform:scaleX(0.9516);transform-origin:0 0;">10</div>
<div style="position:absolute;left:2117.30px;top:1636.09px;font-size:26px;line-height:26px;color:#333333;white-space:nowrap;letter-spacing:-0.35px;">$0.00</div>
<div style="position:absolute;left:2479.20px;top:1636.09px;font-size:26px;line-height:26px;color:#333333;white-space:nowrap;letter-spacing:-0.35px;">$0.00</div>
<div style="position:absolute;left:2690.2px;top:1630.3999999999999px;width:146px;height:64.6px;background:#337ab7;border-radius:5px;box-shadow:inset 0 -2px 0 #2e6da4;"></div>
<div style="position:absolute;left:2717.70px;top:1650.49px;font-size:26px;line-height:26px;color:#ffffff;white-space:nowrap;letter-spacing:0.12px;">Dismiss</div>
<div style="position:absolute;left:548px;top:1710.9px;width:2310px;height:2px;background:#dcd6d6;"></div>
<div style="position:absolute;left:750.50px;top:1735.12px;font-size:26px;line-height:26px;color:#333333;white-space:nowrap;letter-spacing:0.35px;">5/21/18 4:50 PM</div>
<div style="position:absolute;left:990.50px;top:1735.12px;font-size:26px;line-height:26px;color:#3a76ae;white-space:nowrap;letter-spacing:-0.07px;">52477</div>
<div style="position:absolute;left:1205.50px;top:1735.12px;font-size:26px;line-height:26px;color:#3a76ae;white-space:nowrap;">1</div>
<div style="position:absolute;left:1396.00px;top:1735.12px;font-size:26px;line-height:26px;color:#3a76ae;white-space:nowrap;transform:scaleX(0.8707);transform-origin:0 0;">CAR</div>
<div style="position:absolute;left:1896.20px;top:1735.12px;font-size:26px;line-height:26px;color:#333333;white-space:nowrap;">6</div>
<div style="position:absolute;left:2117.30px;top:1735.12px;font-size:26px;line-height:26px;color:#333333;white-space:nowrap;letter-spacing:-0.35px;">$0.00</div>
<div style="position:absolute;left:2479.20px;top:1735.12px;font-size:26px;line-height:26px;color:#333333;white-space:nowrap;letter-spacing:-0.35px;">$0.00</div>
<div style="position:absolute;left:2690.2px;top:1729.4299999999998px;width:146px;height:64.6px;background:#337ab7;border-radius:5px;box-shadow:inset 0 -2px 0 #2e6da4;"></div>
<div style="position:absolute;left:2717.70px;top:1749.52px;font-size:26px;line-height:26px;color:#ffffff;white-space:nowrap;letter-spacing:0.12px;">Dismiss</div>
<div style="position:absolute;left:548px;top:1809.9299999999998px;width:2310px;height:2px;background:#dcd6d6;"></div>
<div style="position:absolute;left:750.50px;top:1834.15px;font-size:26px;line-height:26px;color:#333333;white-space:nowrap;letter-spacing:0.35px;">5/21/18 4:50 PM</div>
<div style="position:absolute;left:990.50px;top:1834.15px;font-size:26px;line-height:26px;color:#3a76ae;white-space:nowrap;letter-spacing:-0.07px;">52447</div>
<div style="position:absolute;left:1205.50px;top:1834.15px;font-size:26px;line-height:26px;color:#3a76ae;white-space:nowrap;">3</div>
<div style="position:absolute;left:1396.00px;top:1834.15px;font-size:26px;line-height:26px;color:#3a76ae;white-space:nowrap;transform:scaleX(0.9121);transform-origin:0 0;">LOADER</div>
<div style="position:absolute;left:1896.20px;top:1834.15px;font-size:26px;line-height:26px;color:#333333;white-space:nowrap;">2</div>
<div style="position:absolute;left:2117.30px;top:1834.15px;font-size:26px;line-height:26px;color:#333333;white-space:nowrap;letter-spacing:-0.35px;">$0.00</div>
<div style="position:absolute;left:2479.20px;top:1834.15px;font-size:26px;line-height:26px;color:#333333;white-space:nowrap;letter-spacing:-0.35px;">$0.00</div>
<div style="position:absolute;left:2690.2px;top:1828.46px;width:146px;height:64.6px;background:#337ab7;border-radius:5px;box-shadow:inset 0 -2px 0 #2e6da4;"></div>
<div style="position:absolute;left:2717.70px;top:1848.55px;font-size:26px;line-height:26px;color:#ffffff;white-space:nowrap;letter-spacing:0.12px;">Dismiss</div>
<div style="position:absolute;left:548px;top:1908.96px;width:2310px;height:2px;background:#dcd6d6;"></div>
<div style="position:absolute;left:750.50px;top:1933.18px;font-size:26px;line-height:26px;color:#333333;white-space:nowrap;letter-spacing:0.35px;">5/21/18 4:50 PM</div>
<div style="position:absolute;left:990.50px;top:1933.18px;font-size:26px;line-height:26px;color:#3a76ae;white-space:nowrap;letter-spacing:-0.07px;">52420</div>
<div style="position:absolute;left:1205.50px;top:1933.18px;font-size:26px;line-height:26px;color:#3a76ae;white-space:nowrap;transform:scaleX(0.9516);transform-origin:0 0;">15</div>
<div style="position:absolute;left:1396.00px;top:1933.18px;font-size:26px;line-height:26px;color:#3a76ae;white-space:nowrap;transform:scaleX(0.8707);transform-origin:0 0;">CAR</div>
<div style="position:absolute;left:1896.20px;top:1933.18px;font-size:26px;line-height:26px;color:#333333;white-space:nowrap;">7</div>
<div style="position:absolute;left:2117.30px;top:1933.18px;font-size:26px;line-height:26px;color:#333333;white-space:nowrap;letter-spacing:-0.35px;">$0.00</div>
<div style="position:absolute;left:2479.20px;top:1933.18px;font-size:26px;line-height:26px;color:#333333;white-space:nowrap;letter-spacing:-0.35px;">$0.00</div>
<div style="position:absolute;left:2690.2px;top:1927.49px;width:146px;height:64.6px;background:#337ab7;border-radius:5px;box-shadow:inset 0 -2px 0 #2e6da4;"></div>
<div style="position:absolute;left:2717.70px;top:1947.58px;font-size:26px;line-height:26px;color:#ffffff;white-space:nowrap;letter-spacing:0.12px;">Dismiss</div>
<svg style="position:absolute;left:15px;top:315px;" width="70" height="210" viewBox="0 0 523 1568" preserveAspectRatio="none"><g fill="#c9c3be">
<path d="M50 140 L228 80 L410 140 L228 205 Z"/>
<path d="M130 180 L228 215 L330 180 L330 238 Q330 282 230 282 Q130 282 130 238 Z"/>
<path d="M112 178 L132 188 Q108 212 112 232 L125 320 L80 320 L92 232 Q92 200 112 178Z"/>
<circle cx="102" cy="232" r="20"/>
<circle cx="230" cy="722" r="62"/>
<path d="M120 868 Q120 782 185 768 Q230 800 278 768 Q342 782 342 868 Q342 905 305 905 L157 905 Q120 905 120 868 Z"/>
<path d="M70 1245 H96 V1460 H392 V1486 H70 Z"/>
<path d="M288 1264 L376 1264 L376 1350 Z"/>
</g><polyline points="128,1435 205,1358 240,1393 338,1295" fill="none" stroke="#c9c3be" stroke-width="44"/></svg>
<svg style="position:absolute;left:15px;top:550px;" width="70" height="130" viewBox="0 0 844 1568" preserveAspectRatio="none"><path d="M355 125 L565 195 L565 420 L355 530 L150 420 L150 195 Z" fill="#c9c3be" stroke="#c9c3be" stroke-width="20" stroke-linejoin="round"/>
<path d="M195 210 L355 155 L520 210 L355 270 Z" fill="#393431"/>
<path d="M375 305 L530 255 L530 405 L375 485 Z" fill="#393431"/>
<rect x="150" y="1025" width="320" height="385" rx="20" fill="#fff"/>
<rect x="215" y="1065" width="185" height="22" fill="#393431"/>
<path d="M305 1130 L465 1130 L600 1265 L600 1475 L305 1475 Z" fill="#fff" stroke="#fff" stroke-width="16" stroke-linejoin="round"/>
<path d="M345 1160 L430 1160 L430 1262 Q430 1290 458 1290 L555 1290 L555 1435 L345 1435 Z" fill="#393431"/>
<path d="M470 1192 L540 1252 L470 1252 Z" fill="#393431"/></svg>
<svg style="position:absolute;left:15px;top:1130px;" width="70" height="130" viewBox="0 0 844 1568" preserveAspectRatio="none"><g transform="rotate(45 285 205)"><rect x="177.5" y="125" width="215" height="160" rx="30" fill="#c9c3be"/><rect x="230" y="168" width="110" height="74" rx="12" fill="#393431"/></g>
<g transform="rotate(45 465 380)"><rect x="357.5" y="300" width="215" height="160" rx="30" fill="#c9c3be"/><rect x="410" y="343" width="110" height="74" rx="12" fill="#393431"/></g>
<circle cx="318" cy="238" r="18" fill="#c9c3be"/><circle cx="432" cy="347" r="18" fill="#c9c3be"/>
<rect x="165" y="1090" width="420" height="385" rx="25" fill="#c9c3be"/>
<rect x="230" y="1025" width="95" height="120" rx="45" fill="#c9c3be"/>
<rect x="420" y="1025" width="95" height="120" rx="45" fill="#c9c3be"/>
<rect x="268" y="1065" width="22" height="75" fill="#393431"/>
<rect x="458" y="1065" width="22" height="75" fill="#393431"/>
<rect x="205" y="1195" width="60" height="55" fill="#393431"/><rect x="205" y="1280" width="60" height="65" fill="#393431"/><rect x="205" y="1378" width="60" height="57" fill="#393431"/><rect x="290" y="1195" width="70" height="55" fill="#393431"/><rect x="290" y="1280" width="70" height="65" fill="#393431"/><rect x="290" y="1378" width="70" height="57" fill="#393431"/><rect x="385" y="1195" width="70" height="55" fill="#393431"/><rect x="385" y="1280" width="70" height="65" fill="#393431"/><rect x="385" y="1378" width="70" height="57" fill="#393431"/><rect x="483" y="1195" width="62" height="55" fill="#393431"/><rect x="483" y="1280" width="62" height="65" fill="#393431"/><rect x="483" y="1378" width="62" height="57" fill="#393431"/></svg>
<svg style="position:absolute;left:15px;top:1285px;" width="70" height="130" viewBox="0 0 844 1568" preserveAspectRatio="none"><g fill="#c9c3be">
<rect x="165" y="230" width="290" height="255" rx="8"/>
<circle cx="310" cy="140" r="50"/><rect x="285" y="170" width="50" height="70"/>
<circle cx="535" cy="372" r="50"/><rect x="440" y="347" width="60" height="50"/>

<path d="M417.0 1262.0 L456.3 1277.5 L442.5 1329.7 L388.3 1341.7 L380.4 1350.4 L397.2 1389.1 L350.6 1416.3 L303.8 1386.4 L292.0 1387.0 L276.5 1426.3 L224.3 1412.5 L212.3 1358.3 L203.6 1350.4 L164.9 1367.2 L137.7 1320.6 L167.6 1273.8 L167.0 1262.0 L127.7 1246.5 L141.5 1194.3 L195.7 1182.3 L203.6 1173.6 L186.8 1134.9 L233.4 1107.7 L280.2 1137.6 L292.0 1137.0 L307.5 1097.7 L359.7 1111.5 L371.7 1165.7 L380.4 1173.6 L419.1 1156.8 L446.3 1203.4 L416.4 1250.2Z"/>
<path d="M587.0 1135.0 L614.2 1147.5 L599.5 1188.4 L558.5 1192.4 L551.0 1197.4 L553.8 1227.2 L511.0 1234.9 L487.1 1201.4 L479.0 1197.4 L454.5 1214.7 L426.5 1181.5 L443.6 1144.0 L443.0 1135.0 L415.8 1122.5 L430.5 1081.6 L471.5 1077.6 L479.0 1072.6 L476.2 1042.8 L519.0 1035.1 L542.9 1068.6 L551.0 1072.6 L575.5 1055.3 L603.5 1088.5 L586.4 1126.0Z"/>
<path d="M587.0 1390.0 L614.2 1402.5 L599.5 1443.4 L558.5 1447.4 L551.0 1452.4 L553.8 1482.2 L511.0 1489.9 L487.1 1456.4 L479.0 1452.4 L454.5 1469.7 L426.5 1436.5 L443.6 1399.0 L443.0 1390.0 L415.8 1377.5 L430.5 1336.6 L471.5 1332.6 L479.0 1327.6 L476.2 1297.8 L519.0 1290.1 L542.9 1323.6 L551.0 1327.6 L575.5 1310.3 L603.5 1343.5 L586.4 1381.0Z"/>
</g>
<circle cx="310" cy="398" r="45" fill="#393431"/><rect x="290" y="420" width="40" height="70" fill="#393431"/>
<circle cx="292" cy="1262" r="62" fill="#393431"/>
<circle cx="515" cy="1135" r="30" fill="#393431"/>
<circle cx="515" cy="1390" r="30" fill="#393431"/></svg>
<svg style="position:absolute;left:15px;top:1440px;" width="70" height="130" viewBox="0 0 844 1568" preserveAspectRatio="none"><g fill="#c9c3be">
<rect x="165" y="175" width="95" height="30" rx="15"/>
<path d="M228 200 L572 205 Q585 208 585 225 L585 365 L310 405 Z"/>
<path d="M280 390 L315 390 L305 445 L268 445Z"/>
<rect x="255" y="428" width="295" height="30" rx="12"/>
<circle cx="295" cy="495" r="35"/><circle cx="515" cy="495" r="35"/>
</g><path d="M355 1050 L500 1108 L500 1252 L355 1310 L210 1252 L210 1108 Z" fill="#c9c3be" stroke="#c9c3be" stroke-width="16" stroke-linejoin="round"/><path d="M355 1075 L443 1110 L355 1147 L267 1110 Z" fill="#393431"/><path d="M370 1165 L463 1145 L463 1222 L370 1262 Z" fill="#393431"/><path d="M230 1240 L375 1298 L375 1442 L230 1500 L85 1442 L85 1298 Z" fill="#c9c3be" stroke="#c9c3be" stroke-width="16" stroke-linejoin="round"/><path d="M230 1265 L318 1300 L230 1337 L142 1300 Z" fill="#393431"/><path d="M245 1355 L338 1335 L338 1412 L245 1452 Z" fill="#393431"/><path d="M485 1240 L630 1298 L630 1442 L485 1500 L340 1442 L340 1298 Z" fill="#c9c3be" stroke="#c9c3be" stroke-width="16" stroke-linejoin="round"/><path d="M485 1265 L573 1300 L485 1337 L397 1300 Z" fill="#393431"/><path d="M500 1355 L593 1335 L593 1412 L500 1452 Z" fill="#393431"/></svg>
<svg style="position:absolute;left:15px;top:1518px;" width="70" height="130" viewBox="0 0 844 1568" preserveAspectRatio="none"><path d="M355 1050 L500 1108 L500 1252 L355 1310 L210 1252 L210 1108 Z" fill="#c9c3be" stroke="#c9c3be" stroke-width="16" stroke-linejoin="round"/><path d="M355 1075 L443 1110 L355 1147 L267 1110 Z" fill="#393431"/><path d="M370 1165 L463 1145 L463 1222 L370 1262 Z" fill="#393431"/><path d="M230 1240 L375 1298 L375 1442 L230 1500 L85 1442 L85 1298 Z" fill="#c9c3be" stroke="#c9c3be" stroke-width="16" stroke-linejoin="round"/><path d="M230 1265 L318 1300 L230 1337 L142 1300 Z" fill="#393431"/><path d="M245 1355 L338 1335 L338 1412 L245 1452 Z" fill="#393431"/><path d="M485 1240 L630 1298 L630 1442 L485 1500 L340 1442 L340 1298 Z" fill="#c9c3be" stroke="#c9c3be" stroke-width="16" stroke-linejoin="round"/><path d="M485 1265 L573 1300 L485 1337 L397 1300 Z" fill="#393431"/><path d="M500 1355 L593 1335 L593 1412 L500 1452 Z" fill="#393431"/></svg>
<svg style="position:absolute;left:15px;top:1675px;" width="70" height="130" viewBox="0 0 844 1568" preserveAspectRatio="none"><g fill="#c9c3be">
<circle cx="470" cy="245" r="115"/>
</g>
<path d="M455 185 L540 140 L610 175 L600 262 L505 280 L458 240 Z" fill="#393431"/>
<line x1="405" y1="325" x2="220" y2="505" stroke="#c9c3be" stroke-width="88" stroke-linecap="round"/>
<circle cx="245" cy="465" r="13" fill="#393431"/>
<path d="M470 1100 L225 1100 Q185 1100 185 1140 L185 1360 Q185 1400 225 1400 L455 1400 Q495 1400 495 1360 L495 1268" fill="none" stroke="#c9c3be" stroke-width="40"/>
<polyline points="255,1215 358,1318 555,1118" fill="none" stroke="#c9c3be" stroke-width="70"/></svg>
<svg style="position:absolute;left:15px;top:1830px;" width="70" height="170" viewBox="0 0 646 1568" preserveAspectRatio="none"><g fill="#c9c3be">
<rect x="120" y="130" width="222" height="225" rx="10"/>
<path d="M340 183 L378 183 L440 243 L440 328 L452 332 L452 352 L340 355 Z"/>
<rect x="115" y="335" width="337" height="22" rx="6"/>
<circle cx="190" cy="358" r="47"/><circle cx="360" cy="358" r="47"/>
<rect x="110" y="850" width="325" height="295" rx="15"/>
<rect x="160" y="800" width="75" height="95" rx="35"/><rect x="310" y="800" width="75" height="95" rx="35"/>
<rect x="140" y="1522" width="268" height="60" rx="12"/>
</g>
<path d="M345 205 L375 205 L412 255 L345 255 Z" fill="#393431"/>
<circle cx="190" cy="358" r="20" fill="#393431"/><circle cx="360" cy="358" r="20" fill="#393431"/>
<rect x="188" y="830" width="22" height="62" fill="#393431"/><rect x="338" y="830" width="22" height="62" fill="#393431"/>
<rect x="143" y="932" width="262" height="185" fill="#393431"/>
<polyline points="203,1018 262,1077 360,978" fill="none" stroke="#c9c3be" stroke-width="30"/></svg>
<svg style="position:absolute;left:25px;top:0px;" width="110" height="115" viewBox="0 0 1500 1568" preserveAspectRatio="none"><circle cx="194" cy="436" r="17" fill="#e07a8a" opacity="0.75"/><circle cx="233" cy="393" r="17" fill="#e07a8a" opacity="0.75"/><circle cx="276" cy="354" r="17" fill="#e07a8a" opacity="0.75"/><circle cx="321" cy="319" r="17" fill="#e07a8a" opacity="0.75"/><circle cx="370" cy="288" r="17" fill="#e07a8a" opacity="0.75"/><circle cx="421" cy="262" r="17" fill="#e07a8a" opacity="0.75"/><circle cx="474" cy="240" r="17" fill="#e07a8a" opacity="0.75"/><circle cx="529" cy="222" r="17" fill="#e07a8a" opacity="0.75"/><circle cx="585" cy="210" r="17" fill="#e07a8a" opacity="0.75"/><circle cx="642" cy="203" r="17" fill="#e07a8a" opacity="0.75"/><circle cx="700" cy="200" r="17" fill="#e07a8a" opacity="0.75"/><circle cx="758" cy="203" r="17" fill="#e07a8a" opacity="0.75"/><circle cx="815" cy="210" r="17" fill="#e07a8a" opacity="0.75"/><circle cx="871" cy="222" r="17" fill="#e07a8a" opacity="0.75"/><circle cx="926" cy="240" r="17" fill="#e07a8a" opacity="0.75"/><circle cx="979" cy="262" r="17" fill="#e07a8a" opacity="0.75"/><circle cx="1030" cy="288" r="17" fill="#e07a8a" opacity="0.75"/><circle cx="1079" cy="319" r="17" fill="#e07a8a" opacity="0.75"/><circle cx="1124" cy="354" r="17" fill="#e07a8a" opacity="0.75"/><circle cx="237" cy="308" r="15" fill="#e48c9a" opacity="0.6"/><circle cx="297" cy="263" r="15" fill="#e48c9a" opacity="0.6"/><circle cx="362" cy="224" r="15" fill="#e48c9a" opacity="0.6"/><circle cx="430" cy="192" r="15" fill="#e48c9a" opacity="0.6"/><circle cx="502" cy="168" r="15" fill="#e48c9a" opacity="0.6"/><circle cx="575" cy="151" r="15" fill="#e48c9a" opacity="0.6"/><circle cx="650" cy="142" r="15" fill="#e48c9a" opacity="0.6"/><circle cx="725" cy="140" r="15" fill="#e48c9a" opacity="0.6"/><circle cx="800" cy="147" r="15" fill="#e48c9a" opacity="0.6"/><circle cx="874" cy="161" r="15" fill="#e48c9a" opacity="0.6"/><circle cx="946" cy="183" r="15" fill="#e48c9a" opacity="0.6"/><circle cx="1016" cy="213" r="15" fill="#e48c9a" opacity="0.6"/><circle cx="545" cy="1440" r="17" fill="#5aa878" opacity="0.7"/><circle cx="495" cy="1424" r="17" fill="#5aa878" opacity="0.7"/><circle cx="446" cy="1404" r="17" fill="#5aa878" opacity="0.7"/><circle cx="400" cy="1380" r="17" fill="#5aa878" opacity="0.7"/><circle cx="356" cy="1351" r="17" fill="#5aa878" opacity="0.7"/><circle cx="314" cy="1320" r="17" fill="#5aa878" opacity="0.7"/><circle cx="276" cy="1284" r="17" fill="#5aa878" opacity="0.7"/><circle cx="240" cy="1246" r="17" fill="#5aa878" opacity="0.7"/><circle cx="209" cy="1204" r="17" fill="#5aa878" opacity="0.7"/><circle cx="180" cy="1160" r="17" fill="#5aa878" opacity="0.7"/><circle cx="156" cy="1114" r="17" fill="#5aa878" opacity="0.7"/><circle cx="136" cy="1065" r="17" fill="#5aa878" opacity="0.7"/><circle cx="120" cy="1015" r="17" fill="#5aa878" opacity="0.7"/><circle cx="109" cy="964" r="17" fill="#5aa878" opacity="0.7"/><circle cx="102" cy="912" r="17" fill="#5aa878" opacity="0.7"/><circle cx="100" cy="860" r="17" fill="#5aa878" opacity="0.7"/><circle cx="102" cy="808" r="17" fill="#5aa878" opacity="0.7"/><circle cx="109" cy="756" r="17" fill="#5aa878" opacity="0.7"/><circle cx="120" cy="705" r="17" fill="#5aa878" opacity="0.7"/><circle cx="136" cy="655" r="17" fill="#5aa878" opacity="0.7"/><circle cx="474" cy="1480" r="14" fill="#6cb888" opacity="0.55"/><circle cx="411" cy="1453" r="14" fill="#6cb888" opacity="0.55"/><circle cx="350" cy="1420" r="14" fill="#6cb888" opacity="0.55"/><circle cx="294" cy="1380" r="14" fill="#6cb888" opacity="0.55"/><circle cx="242" cy="1335" r="14" fill="#6cb888" opacity="0.55"/><circle cx="194" cy="1284" r="14" fill="#6cb888" opacity="0.55"/><circle cx="153" cy="1229" r="14" fill="#6cb888" opacity="0.55"/><circle cx="117" cy="1170" r="14" fill="#6cb888" opacity="0.55"/><circle cx="88" cy="1107" r="14" fill="#6cb888" opacity="0.55"/><circle cx="66" cy="1042" r="14" fill="#6cb888" opacity="0.55"/><circle cx="50" cy="975" r="14" fill="#6cb888" opacity="0.55"/><circle cx="42" cy="906" r="14" fill="#6cb888" opacity="0.55"/><circle cx="40" cy="837" r="14" fill="#6cb888" opacity="0.55"/><circle cx="46" cy="768" r="14" fill="#6cb888" opacity="0.55"/><circle cx="60" cy="700" r="14" fill="#6cb888" opacity="0.55"/><circle cx="1376" cy="679" r="18" fill="#eee07a" opacity="0.7"/><circle cx="1389" cy="738" r="18" fill="#eee07a" opacity="0.7"/><circle cx="1397" cy="799" r="18" fill="#eee07a" opacity="0.7"/><circle cx="1400" cy="860" r="18" fill="#eee07a" opacity="0.7"/><circle cx="1397" cy="921" r="18" fill="#eee07a" opacity="0.7"/><circle cx="1389" cy="982" r="18" fill="#eee07a" opacity="0.7"/><circle cx="1376" cy="1041" r="18" fill="#eee07a" opacity="0.7"/><circle cx="1358" cy="1099" r="18" fill="#eee07a" opacity="0.7"/><circle cx="1334" cy="1156" r="18" fill="#eee07a" opacity="0.7"/><circle cx="1306" cy="1210" r="18" fill="#eee07a" opacity="0.7"/><circle cx="1273" cy="1262" r="18" fill="#eee07a" opacity="0.7"/><circle cx="1236" cy="1310" r="18" fill="#eee07a" opacity="0.7"/><circle cx="1195" cy="1355" r="18" fill="#eee07a" opacity="0.7"/><circle cx="1150" cy="1396" r="18" fill="#eee07a" opacity="0.7"/><circle cx="1102" cy="1433" r="18" fill="#eee07a" opacity="0.7"/><circle cx="1050" cy="1466" r="18" fill="#eee07a" opacity="0.7"/><circle cx="996" cy="1494" r="18" fill="#eee07a" opacity="0.7"/><circle cx="939" cy="1518" r="18" fill="#eee07a" opacity="0.7"/>
<path d="M250 640 Q470 410 800 470" fill="none" stroke="#17a84a" stroke-width="115"/>
<path d="M760 370 L915 510 L755 595 Z" fill="#17a84a"/>
<path d="M1120 470 Q1190 800 960 1000" fill="none" stroke="#e52229" stroke-width="125"/>
<path d="M860 945 L1055 1090 L865 1125 Z" fill="#e52229"/>
<path d="M790 1290 Q460 1240 400 900" fill="none" stroke="#fbe625" stroke-width="115"/>
<path d="M305 925 L385 765 L505 880 Z" fill="#fbe625"/></svg>
<div style="position:absolute;left:132px;top:15.6px;font-family:'Liberation Serif',serif;color:#0a0a0a;-webkit-text-stroke:0.7px #0a0a0a;white-space:nowrap;transform-origin:0 0;transform:scaleX(1.18);"><span style="font-size:68px;line-height:68px;">R</span><span style="font-size:55px;line-height:68px;letter-spacing:0.5px;">EVIVE</span></div>
<div style="position:absolute;left:385px;top:35px;width:4px;height:4px;border-radius:50%;background:#666;"></div>
<div style="position:absolute;left:134px;top:87.7px;font-family:'Liberation Sans',sans-serif;font-style:italic;font-weight:700;font-size:12px;line-height:12px;color:#222;letter-spacing:1.9px;white-space:nowrap;transform-origin:0 0;transform:scaleX(1.136) scaleY(0.85);">...KICKSTART YOUR DEMAND</div>
<svg style="position:absolute;left:1315px;top:0px;" width="340" height="110" viewBox="0 0 2352 761" preserveAspectRatio="none">
<rect x="180" y="30" width="55" height="42" fill="#222"/>
<rect x="250" y="65" width="70" height="70" fill="#3db3c7"/>
<rect x="150" y="110" width="100" height="120" fill="#3db3c7"/>
<path d="M210 222 H525 Q652 222 652 345 V365 Q652 482 525 482 H390 V415 H515 Q582 415 582 365 V345 Q582 292 515 292 H210 Z" fill="#3db3c7"/>
<path d="M295 425 L385 425 L645 620 L510 620 L295 495 Z" fill="#2e2e2e"/>
<path d="M112 350 Q-20 600 180 712 Q420 770 790 282 Q420 720 190 690 Q40 610 112 350Z" fill="#3db3c7"/>
<g fill="#2e2e2e">
<path d="M700 460 Q700 420 745 420 H915 V455 H745 V500 H915 V535 H745 V582 H920 V620 H745 Q700 620 700 580 Z"/>
<path d="M945 420 H1130 Q1180 420 1180 470 V490 Q1180 540 1130 540 H990 V620 H945 Z M990 455 V505 H1120 Q1135 505 1135 490 V470 Q1135 455 1120 455 Z"/>
<path d="M1180 620 L1300 410 H1360 L1480 620 H1430 L1400 570 H1260 L1230 620 Z M1280 535 H1380 L1330 448 Z"/>
<path d="M1455 420 H1672 V455 H1585 V620 H1542 V455 H1455 Z"/>
<path d="M1700 420 H1745 V500 H1895 V420 H1940 V620 H1895 V540 H1745 V620 H1700 Z"/>
<rect x="1985" y="420" width="45" height="200"/>
<path d="M2110 420 H2280 V455 H2110 Q2105 455 2105 470 V485 Q2105 500 2115 500 H2235 Q2285 500 2285 550 V570 Q2285 620 2235 620 H2060 V585 H2230 Q2240 585 2240 570 V555 Q2240 540 2230 540 H2110 Q2060 540 2060 490 V470 Q2060 420 2110 420 Z"/>
</g></svg></body></html>
